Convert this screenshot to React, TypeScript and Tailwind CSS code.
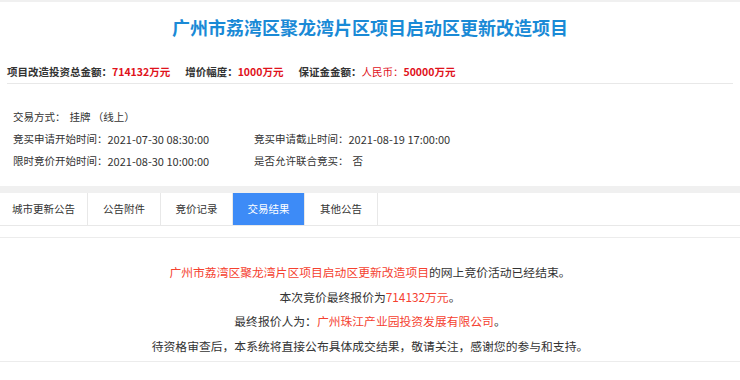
import React from 'react';

const tabs = ['城市更新公告', '公告附件', '竞价记录', '交易结果', '其他公告'];
const tabWidths = ['w-[88px]', 'w-[73px]', 'w-[72px]', 'w-[72px]', 'w-[73px]'];

const App: React.FC = () => {
  const active = 3;

  return (
    <div className="w-[740px] h-[380px] overflow-hidden bg-white text-[#333] font-['Noto_Sans_CJK_SC','Microsoft_YaHei',sans-serif]">
      <div className="h-[2px] bg-[#f0f0f0]" />

      {/* Title */}
      <div className="h-[50px] flex items-center justify-center">
        <h1 className="text-[18px] font-bold text-[#1a8ad6] leading-none">
          广州市荔湾区聚龙湾片区项目启动区更新改造项目
        </h1>
      </div>

      {/* Summary */}
      <div className="mt-[10px] mx-[7px] h-[22px] border-b border-[#e8e8e8] flex items-center text-[10.5px] font-bold leading-none">
        <span>项目改造投资总金额：</span>
        <span className="text-[#e0121b]">714132万元</span>
        <span className="ml-[15px]">增价幅度：</span>
        <span className="text-[#e0121b]">1000万元</span>
        <span className="ml-[15px]">保证金金额：</span>
        <span className="text-[#e0121b] font-normal">人民币：</span>
        <span className="text-[#e0121b]">50000万元</span>
      </div>

      {/* Trading info */}
      <div className="pt-[22px] pl-[13px] pb-[14px] text-[10.5px] leading-none">
        <div className="h-[22px] flex items-center">
          <span>交易方式：</span>
          <span className="ml-[4px]">挂牌 （线上）</span>
        </div>
        <div className="grid grid-cols-[241px_1fr]">
          <div className="h-[22px] flex items-center">
            竞买申请开始时间：<span className="text-[11px]">2021-07-30 08:30:00</span>
          </div>
          <div className="h-[22px] flex items-center">
            竞买申请截止时间：<span className="text-[11px]">2021-08-19 17:00:00</span>
          </div>
          <div className="h-[22px] flex items-center">
            限时竞价开始时间：<span className="text-[11px]">2021-08-30 10:00:00</span>
          </div>
          <div className="h-[22px] flex items-center">
            是否允许联合竞买：<span className="ml-[4px]">否</span>
          </div>
        </div>
      </div>

      <div className="h-[7px] bg-[#f0f0f0]" />

      {/* Tabs */}
      <div className="h-[33px] flex border-b border-[#e8e8e8]">
        {tabs.map((t, i) => (
          <div
            key={t}
            className={`${tabWidths[i]} h-full flex items-center justify-center text-[10.5px] border-r border-[#e8e8e8] ${
              i === active ? 'bg-[#3d8bf7] text-white' : 'text-[#333]'
            }`}
          >
            {t}
          </div>
        ))}
      </div>

      <div className="h-[12px] border-b border-[#ececec]" />

      {/* Result */}
      <div className="pt-[22px] pb-[3px] border-b border-[#ececec] text-center text-[11.8px] leading-[24.5px]">
        <p>
          <span className="text-[#f5412f]">广州市荔湾区聚龙湾片区项目启动区更新改造项目</span>的网上竞价活动已经结束。
        </p>
        <p>
          本次竞价最终报价为<span className="text-[#f5412f]">714132万元</span>。
        </p>
        <p>
          最终报价人为：<span className="text-[#f5412f]">广州珠江产业园投资发展有限公司</span>。
        </p>
        <p>待资格审查后，本系统将直接公布具体成交结果，敬请关注，感谢您的参与和支持。</p>
      </div>
    </div>
  );
};

export default App;
